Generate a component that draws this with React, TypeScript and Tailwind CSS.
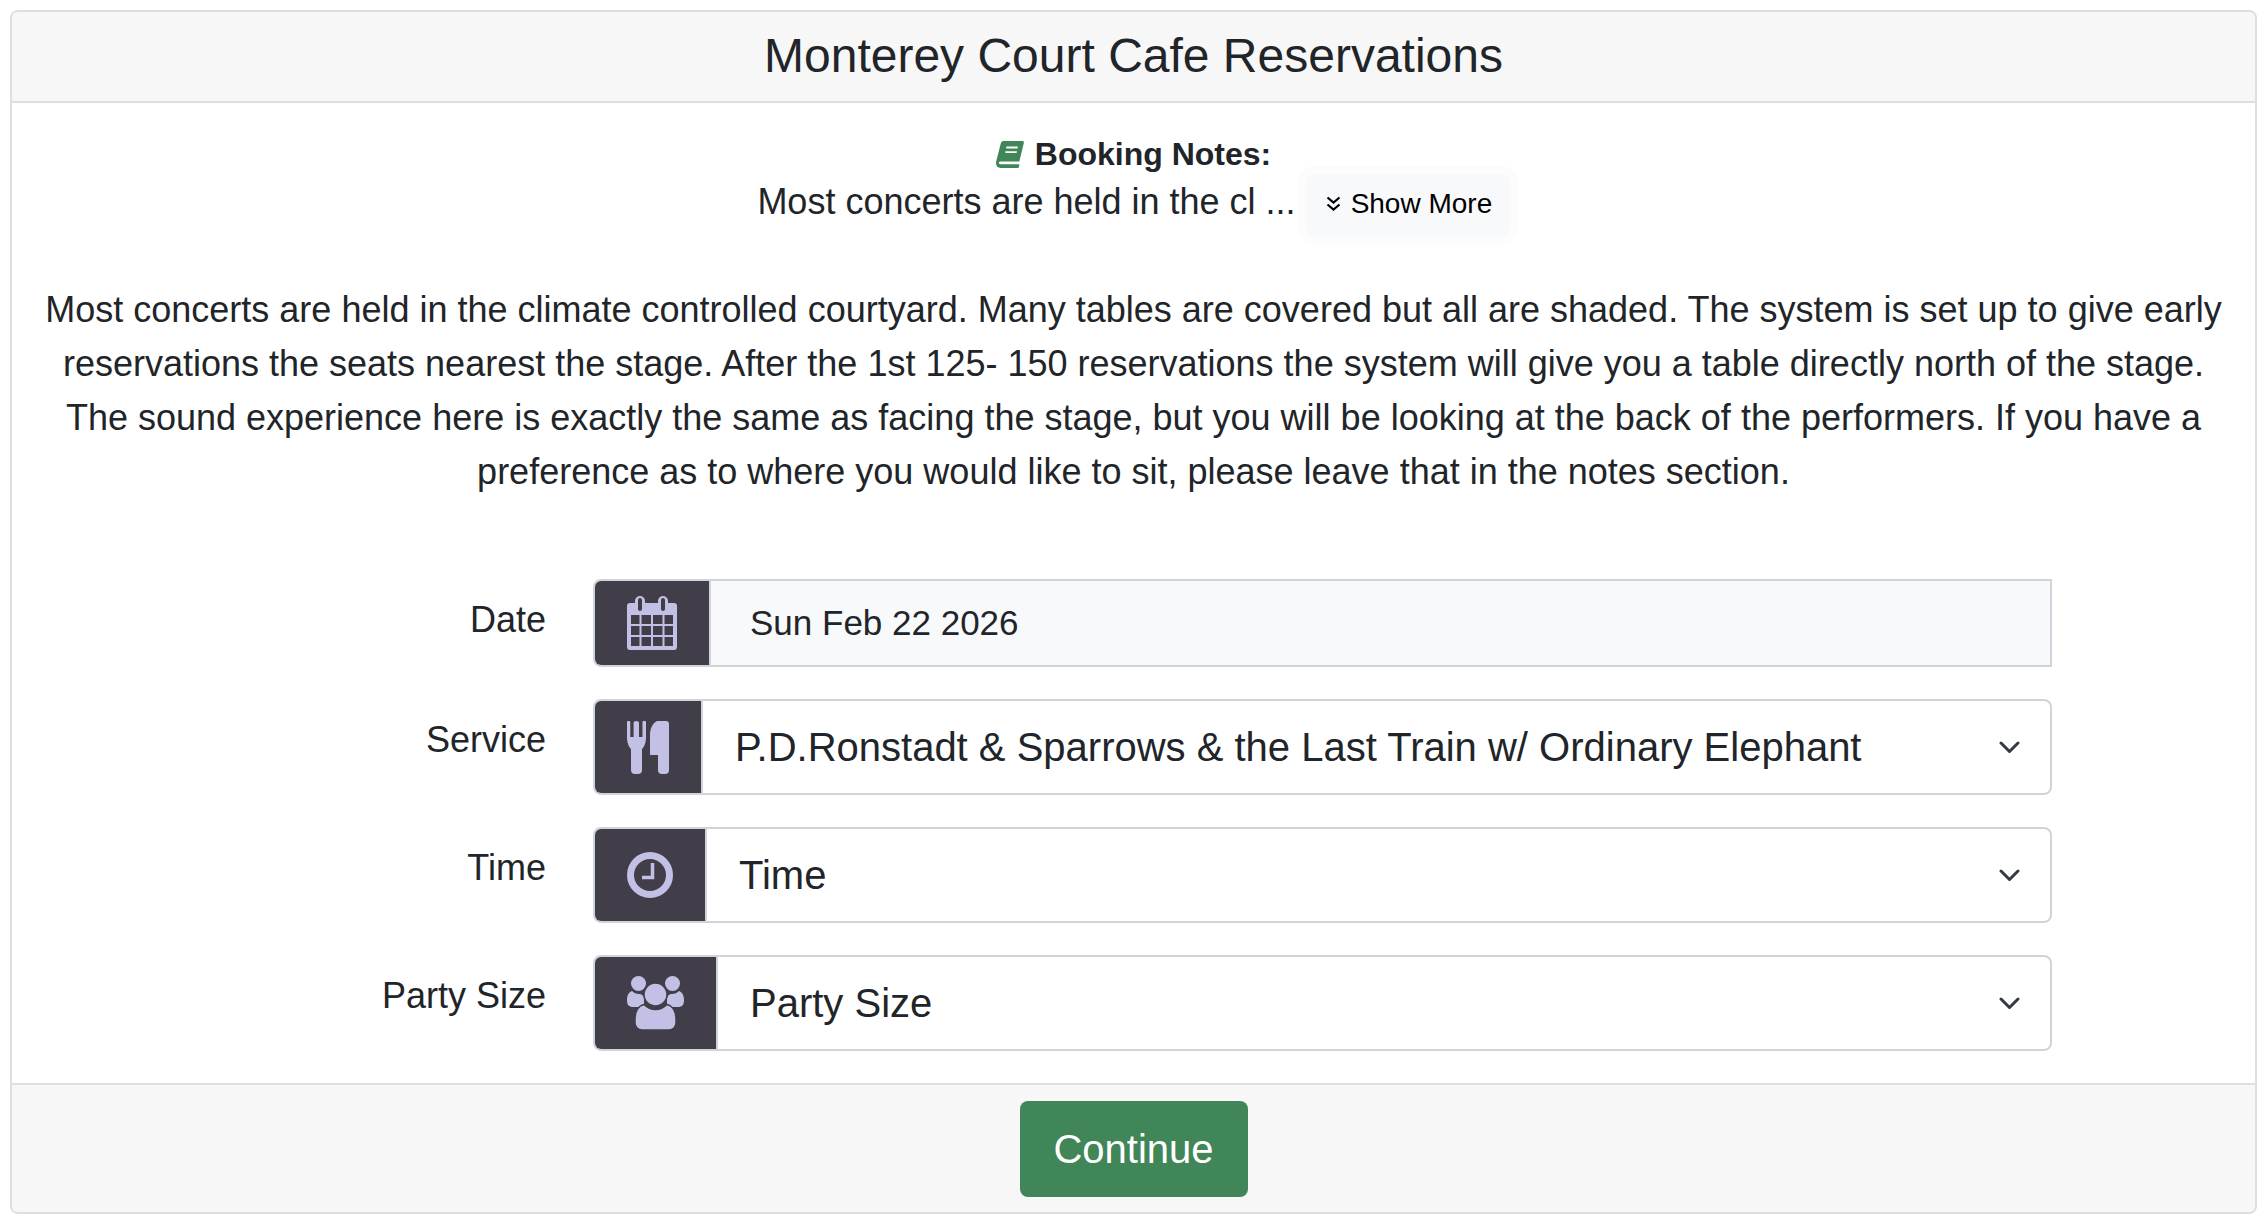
import React from "react";

const iconColor = "#c3c0e6";
const dark = "#423e49";

function CalendarIcon() {
  return (
    <svg width="50" height="54" viewBox="0 0 50 54" fill={iconColor}>
      <path fillRule="evenodd" d="M3 7h5V5a5 5 0 0 1 10 0v2h13V5a5 5 0 0 1 10 0v2h6a3 3 0 0 1 3 3v41a3 3 0 0 1-3 3H3a3 3 0 0 1-3-3V10a3 3 0 0 1 3-3zM11 4v9a2 2 0 0 0 4 0V4a2 2 0 0 0-4 0zM34 4v9a2 2 0 0 0 4 0V4a2 2 0 0 0-4 0zM4 19v9h8.500v-9zM14.500 19v9h9.500v-9zM26 19v9h9.500v-9zM37.500 19v9H46v-9zM4 30v9h8.500v-9zM14.500 30v9h9.500v-9zM26 30v9h9.500v-9zM37.500 30v9H46v-9zM4 41v9h8.500v-9zM14.500 41v9h9.500v-9zM26 41v9h9.500v-9zM37.500 41v9H46v-9z" />
    </svg>
  );
}

function UtensilsIcon() {
  return (
    <svg width="42" height="53" viewBox="0 0 42 53" fill={iconColor}>
      <path d="M0 1.500a1.650 1.650 0 0 1 3.300 0V16h3.300V1.500a2.700 1.500 0 0 1 5.400 0V16h3.500V1.500a1.750 1.750 0 0 1 3.500 0V16c0 6-2 10-4 12v21a4 4 0 0 1-4 4H8a4 4 0 0 1-4-4V28c-2-2-4-6-4-12z" />
      <path d="M30 0h9a3 3 0 0 1 3 3v46a4 4 0 0 1-4 4h-3a4 4 0 0 1-4-4V34h-8V14c0-7 3-12 7-14z" />
    </svg>
  );
}

function ClockIcon() {
  return (
    <svg width="46" height="46" viewBox="0 0 46 46" fill="none">
      <circle cx="23" cy="23" r="19.500" stroke={iconColor} strokeWidth="7" />
      <path d="M25.500 11v14.500H15" stroke={iconColor} strokeWidth="3.500" />
    </svg>
  );
}

function UsersIcon() {
  return (
    <svg width="57" height="54" viewBox="0 0 57 54" fill={iconColor}>
      <circle cx="11.500" cy="7.500" r="7.500" />
      <circle cx="45.500" cy="7.500" r="7.500" />
      <path d="M0 24c0-5 2-8 5-9 2 2 4 3 7 3 3 0 5 2 5 6v7H6c-4 0-6-2-6-7z" />
      <path d="M57 24c0-5-2-8-5-9-2 2-4 3-7 3-3 0-5 2-5 6v7h11c4 0 6-2 6-7z" />
      <circle cx="28.500" cy="18.500" r="11.500" stroke={dark} strokeWidth="1.500" />
      <path d="M8 43c0-7 3-13 9-14.500 3 3 7 5 11.500 5s8.500-2 11.500-5c6 1.500 9 7.500 9 14.500v4a7 7 0 0 1-7 7H15a7 7 0 0 1-7-7z" stroke={dark} strokeWidth="1.500" />
    </svg>
  );
}

function BookIcon() {
  return (
    <svg width="28" height="27" viewBox="0 0 30 29" fill="#418659">
      <path fillRule="evenodd" d="M8 0h20c2 0 2 1 1.800 2.500L25 22H6c-2 0-3 .5-3 1.500S4 25 6 25h18.500c.5 0 .7.500.5 1l-.5 2c-.1.600-.5 1-1 1H5c-3 0-5-2-5-5 0-.5 0-1.500.300-2.500L5 3c.4-1.800 1.500-3 3-3zM11 6v2h12l.5-2zM10 11v2h12l.5-2z" />
    </svg>
  );
}

function Chevron() {
  return (
    <svg width="21" height="13" viewBox="0 0 21 13" fill="none" className="shrink-0">
      <path d="M2 2l8.500 8.500L19 2" stroke="#343a40" strokeWidth="3" strokeLinecap="round" strokeLinejoin="round" />
    </svg>
  );
}

function Row({ label, addon, icon, text, textClass, boxClass, chevron }: { label: string; addon: string; icon: React.ReactNode; text: string; textClass: string; boxClass: string; chevron?: boolean }) {
  return (
    <div className="flex">
      <div className="w-[534px] shrink-0 pt-[14px] text-right text-[36px] leading-[54px]">{label}</div>
      <div className={`ml-[47px] flex w-[1459px] overflow-hidden rounded-l-[8px] border-2 border-[#ced4da] ${boxClass}`}>
        <div className={`flex ${addon} shrink-0 items-center justify-center border-r-2 border-[#ced4da] [background-clip:padding-box] bg-[#423e49]`}>{icon}</div>
        <div className={`flex flex-1 items-center justify-between pr-[30px] ${textClass}`}>
          <span>{text}</span>
          {chevron ? <Chevron /> : null}
        </div>
      </div>
    </div>
  );
}

export default function App() {
  return (
    <div className="min-h-[1222px] bg-white p-[10px] text-[#212529] [font-family:'Liberation_Sans',Arial,sans-serif]">
      <div className="w-[2247px] overflow-hidden rounded-[8px] border-2 border-[#dfdfdf]">
        <div className="flex h-[91px] items-center justify-center border-b-2 border-[#dfdfdf] bg-[#f7f7f7] pb-[2px] text-[48px] leading-[58px]">
          Monterey Court Cafe Reservations
        </div>
        <div className="h-[980px] pt-[27px] text-center text-[36px] leading-[54px]">
          <div className="flex h-[48px] items-center justify-center gap-[11px] text-[32px] font-bold leading-[48px]">
            <BookIcon />
            <span>Booking Notes:</span>
          </div>
          <div className="flex h-[48px] items-start justify-center">
            <span className="leading-[48px]">Most concerts are held in the cl ...</span>
            <span className="ml-[10px] -mt-[4px] flex h-[62px] w-[204px] items-center gap-[10px] rounded-[8px] bg-[#f8f9fa] pb-[3px] pl-[20px] text-[28px] text-black shadow-[0_0_0_8px_#fcfcfd]">
              <svg width="15" height="15" viewBox="0 0 15 15" fill="none" stroke="black" strokeWidth="2.200">
                <path d="M1.500 1.500l6 5 6-5M1.500 8.500l6 5 6-5" />
              </svg>
              Show More
            </span>
          </div>
          <p className="mx-auto mt-[57px] w-[2190px]">
            Most concerts are held in the climate controlled courtyard. Many tables are covered but all are shaded. The system is set up to give early reservations the seats nearest the stage. After the 1st 125- 150 reservations the system will give you a table directly north of the stage. The sound experience here is exactly the same as facing the stage, but you will be looking at the back of the performers. If you have a preference as to where you would like to sit, please leave that in the notes section.
          </p>
          <div className="mt-[80px] flex flex-col gap-[32px]">
            <Row label="Date" addon="w-[116px]" icon={<CalendarIcon />} text="Sun Feb 22 2026" textClass="bg-[#f8f9fa] pl-[39px] text-[35px]" boxClass="h-[88px]" />
            <Row label="Service" addon="w-[108px]" icon={<UtensilsIcon />} text="P.D.Ronstadt & Sparrows & the Last Train w/ Ordinary Elephant" textClass="pl-[32px] text-[40px]" boxClass="h-[96px] rounded-r-[8px]" chevron />
            <Row label="Time" addon="w-[112px]" icon={<ClockIcon />} text="Time" textClass="pl-[32px] text-[40px]" boxClass="h-[96px] rounded-r-[8px]" chevron />
            <Row label="Party Size" addon="w-[123px]" icon={<UsersIcon />} text="Party Size" textClass="pl-[32px] text-[40px]" boxClass="h-[96px] rounded-r-[8px]" chevron />
          </div>
        </div>
        <div className="flex h-[129px] items-center justify-center border-t-2 border-[#dfdfdf] bg-[#f7f7f7]">
          <button className="h-[96px] w-[228px] rounded-[8px] bg-[#418659] text-[40px] text-white">Continue</button>
        </div>
      </div>
    </div>
  );
}
